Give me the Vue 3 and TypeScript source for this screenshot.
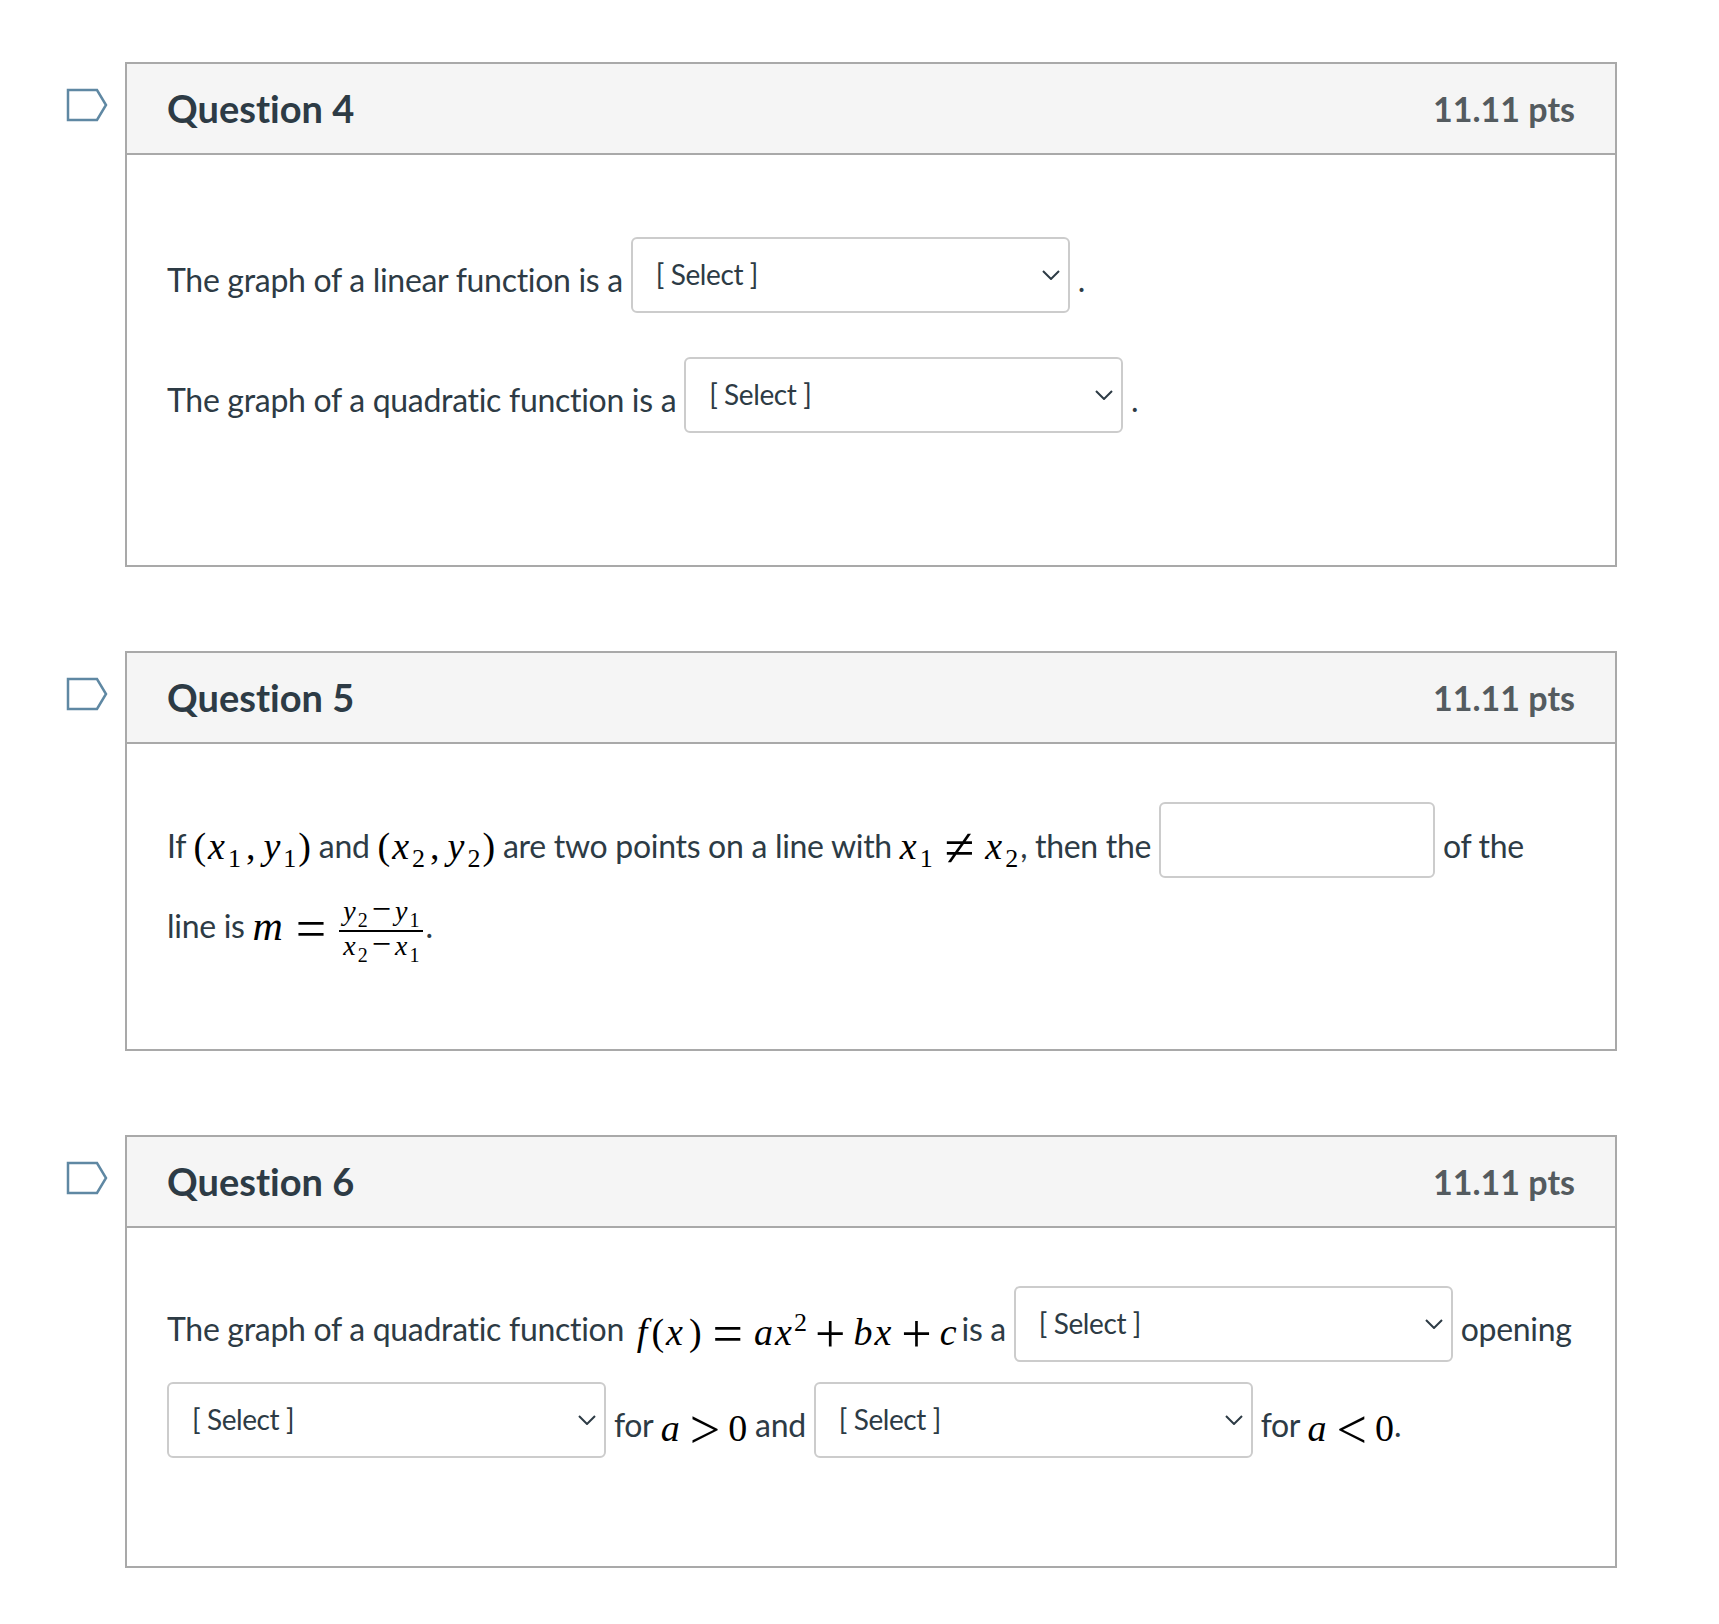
<script setup lang="ts">
const points = '11.11 pts'
</script>

<template>
  <main class="page">
    <section class="question">
      <svg class="marker" width="43" height="34" viewBox="0 0 43 34"><path d="M2 2H31L40 17L31 32H2Z" fill="#fff" stroke="#5f88a3" stroke-width="2.5"/></svg>
      <header class="head"><h2>Question 4</h2><span class="pts">{{ points }}</span></header>
      <div class="body extra">
        <p>The graph of a linear function is a <span class="sel"><span>[ Select ]</span><svg class="chev" width="18" height="10" viewBox="0 0 18 10"><path d="M1 1L9 9L17 1" fill="none" stroke="#2d3b45" stroke-width="2"/></svg></span> .</p>
        <p>The graph of a quadratic function is a <span class="sel"><span>[ Select ]</span><svg class="chev" width="18" height="10" viewBox="0 0 18 10"><path d="M1 1L9 9L17 1" fill="none" stroke="#2d3b45" stroke-width="2"/></svg></span> .</p>
      </div>
    </section>

    <section class="question">
      <svg class="marker" width="43" height="34" viewBox="0 0 43 34"><path d="M2 2H31L40 17L31 32H2Z" fill="#fff" stroke="#5f88a3" stroke-width="2.5"/></svg>
      <header class="head"><h2>Question 5</h2><span class="pts">{{ points }}</span></header>
      <div class="body q5">
        <p>If <span class="m near"><span class="up open">(</span><i>x</i><sub>1</sub><span class="up comma">,</span><i>y</i><sub>1</sub><span class="up close">)</span></span> and <span class="m near"><span class="up open">(</span><i>x</i><sub>2</sub><span class="up comma">,</span><i>y</i><sub>2</sub><span class="up close">)</span></span> are two points on a line with <span class="m near tail"><i>x</i><sub>1</sub><span class="up rel wide">≠</span><i>x</i><sub>2</sub></span>, then the <input class="field" type="text" aria-label="answer"> of the<br>line is <span class="m mid"><i class="em">m</i><span class="up rel wide">=</span></span><span class="frac"><span class="num"><i>y</i><sub>2</sub><span class="up minus">−</span><i>y</i><sub>1</sub></span><span class="den"><i>x</i><sub>2</sub><span class="up minus">−</span><i>x</i><sub>1</sub></span></span>.</p>
      </div>
    </section>

    <section class="question">
      <svg class="marker" width="43" height="34" viewBox="0 0 43 34"><path d="M2 2H31L40 17L31 32H2Z" fill="#fff" stroke="#5f88a3" stroke-width="2.5"/></svg>
      <header class="head"><h2>Question 6</h2><span class="pts">{{ points }}</span></header>
      <div class="body">
        <p>The graph of a quadratic function <span class="m low lead"><i class="fn">f</i><span class="up open">(</span><i class="arg">x</i><span class="up close">)</span><span class="up rel wide">=</span><i>ax</i><sup>2</sup><span class="up rel">+</span><i>bx</i><span class="up rel">+</span><i class="last">c</i></span> is a <span class="sel"><span>[ Select ]</span><svg class="chev" width="18" height="10" viewBox="0 0 18 10"><path d="M1 1L9 9L17 1" fill="none" stroke="#2d3b45" stroke-width="2"/></svg></span> opening <span class="sel"><span>[ Select ]</span><svg class="chev" width="18" height="10" viewBox="0 0 18 10"><path d="M1 1L9 9L17 1" fill="none" stroke="#2d3b45" stroke-width="2"/></svg></span> for <span class="m low"><i>a</i><span class="up rel">&gt;</span><span class="up">0</span></span> and <span class="sel"><span>[ Select ]</span><svg class="chev" width="18" height="10" viewBox="0 0 18 10"><path d="M1 1L9 9L17 1" fill="none" stroke="#2d3b45" stroke-width="2"/></svg></span> for <span class="m low"><i>a</i><span class="up rel">&lt;</span><span class="up">0</span></span>.</p>
      </div>
    </section>
  </main>
</template>

<style scoped>
.page {
  padding: 62px 102px 56px 125px;
  font-family: Lato, "Open Sans", sans-serif;
  font-variant-ligatures: none;
  color: #2d3b45;
}
.question {
  position: relative;
  border: 2px solid #a9a9a9;
  margin-bottom: 84px;
}
.question:last-child { margin-bottom: 0; }
.marker {
  position: absolute;
  left: -61px;
  top: 24px;
}
.head {
  display: flex;
  justify-content: space-between;
  align-items: center;
  height: 89px;
  padding: 0 40px;
  background: #f5f5f5;
  border-bottom: 2px solid #a9a9a9;
}
h2 {
  margin: 0;
  padding-bottom: 2px;
  font-size: 38px;
  font-weight: 700;
}
.pts {
  font-size: 34px;
  font-weight: 700;
  color: #545b5f;
}
.body {
  padding: 58px 40px 64px;
}
.body.extra { padding: 82px 40px 88px; }
.body.q5 { padding-bottom: 65px; }
p {
  margin: 0 0 24px;
  font-size: 32px;
  line-height: 48px;
  letter-spacing: -0.3px;
}
.sel {
  display: inline-flex;
  justify-content: space-between;
  align-items: baseline;
  box-sizing: border-box;
  width: 439px;
  height: 76px;
  margin-bottom: 20px;
  padding: 11px 8px 0 23px;
  border: 2px solid #ccc;
  border-radius: 6px;
  background: #fff;
  font-size: 28px;
  line-height: 48px;
  letter-spacing: -0.4px;
  vertical-align: 7px;
}
.chev {
  align-self: center;
  margin-top: -11px;
}
.field {
  box-sizing: border-box;
  width: 276px;
  height: 76px;
  margin: 0 0 20px;
  border: 2px solid #ccc;
  border-radius: 6px;
  background: #fff;
  vertical-align: 8px;
  font-size: 29px;
}
.m {
  font-family: "Liberation Serif", serif;
  font-size: 38px;
  letter-spacing: 0;
  color: #000;
  white-space: nowrap;
}
.m i, .frac i {
  letter-spacing: 2px;
}
.near { vertical-align: -1px; }
.mid { vertical-align: -2px; }
.low { vertical-align: -4px; }
.tail { margin-right: 1px; }
.lead { margin-left: 5px; }
.fn { margin-right: 2px; }
.arg { margin-right: 3px; }
.last { margin-right: -5px; }
.em { font-size: 42px; }
.up { font-style: normal; }
.open { margin-right: 2px; }
.close { margin-left: 1px; }
.comma { margin: 0 8px 0 4px; }
.rel {
  margin: 0 8px;
  font-size: 54px;
  line-height: 0;
  vertical-align: -7px;
}
.rel.wide { margin: 0 11px; }
sub, sup {
  font-size: 26px;
  line-height: 0;
}
.m sub { margin: 0 1px; }
.frac {
  display: inline-flex;
  flex-direction: column;
  align-items: center;
  vertical-align: 18px;
  margin: -2px 2px 0;
  font-family: "Liberation Serif", serif;
  font-size: 28px;
  line-height: 29px;
  letter-spacing: 0;
  color: #000;
}
.frac sub { font-size: 20px; }
.minus {
  margin: 0 4px;
  font-size: 34px;
  line-height: 0;
}
.num {
  display: block;
  padding: 0 4px 5px;
  border-bottom: 2px solid #000;
}
.den {
  display: block;
  padding: 0 4px;
  line-height: 28px;
}
</style>
